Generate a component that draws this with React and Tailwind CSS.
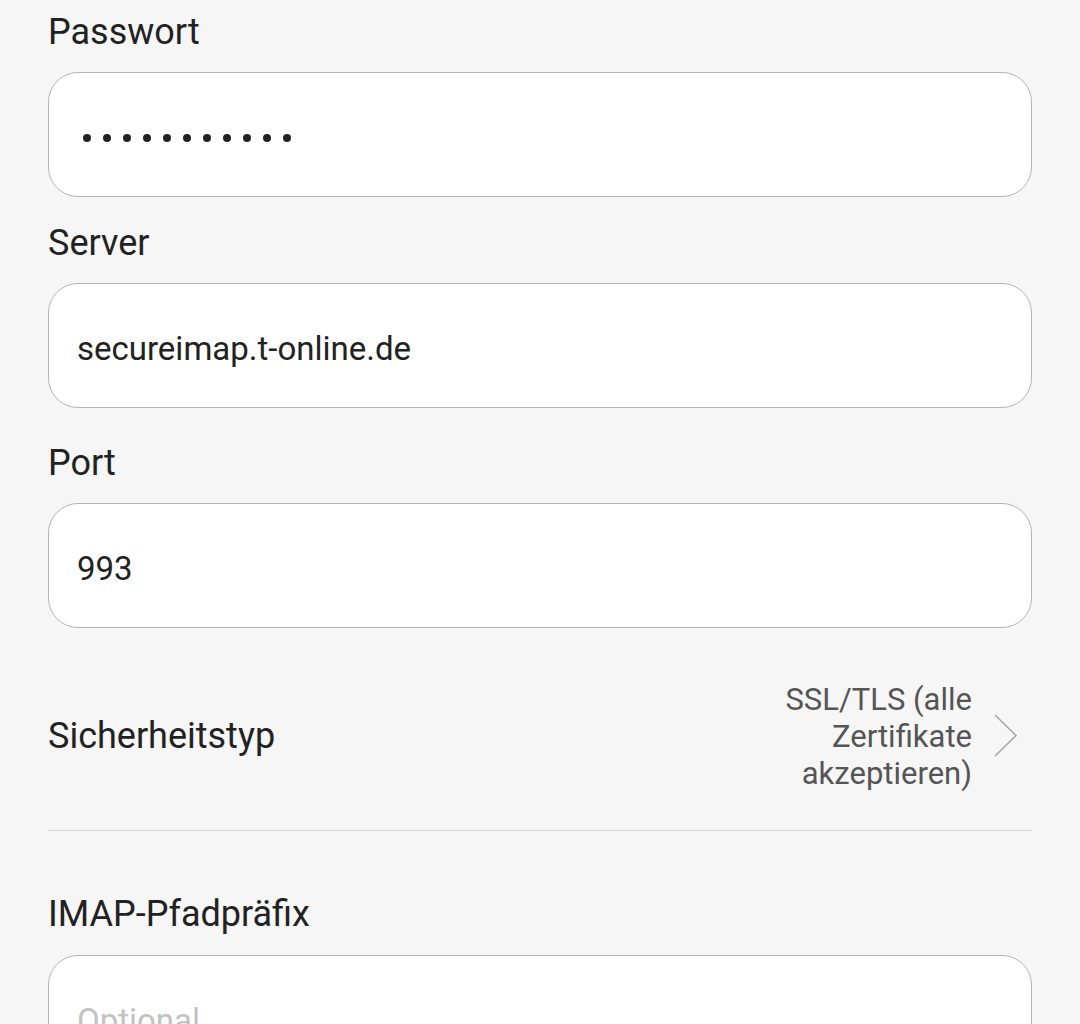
import React from "react";

const font = { fontFamily: "Roboto, 'Noto Sans', sans-serif" };

function Label({ children, className = "" }) {
  return (
    <div className={`text-[36px] leading-[42px] text-[#222222] ${className}`}>{children}</div>
  );
}

function Field({ children, className = "" }) {
  return (
    <div
      className={`mt-[19px] h-[125px] rounded-[30px] border border-[#b4b4b4] bg-white pl-[28px] pt-[6px] flex items-center ${className}`}
    >
      {children}
    </div>
  );
}

export default function App() {
  const dots = Array.from({ length: 11 });
  return (
    <div
      className="h-[1024px] overflow-hidden bg-[#f6f6f6] px-[48px] pt-[11px]"
      style={font}
    >
      <Label>Passwort</Label>
      <Field>
        <div className="ml-[6px] flex gap-[12px]">
          {dots.map((_, i) => (
            <span key={i} className="block h-[8px] w-[8px] rounded-full bg-[#222222]" />
          ))}
        </div>
      </Field>

      <Label className="mt-[25px]">Server</Label>
      <Field>
        <span className="text-[33px] leading-[39px] text-[#222222]">secureimap.t-online.de</span>
      </Field>

      <Label className="mt-[34px]">Port</Label>
      <Field>
        <span className="text-[33px] leading-[39px] text-[#222222]">993</span>
      </Field>

      <div className="mt-[14px] flex h-[189px] items-center justify-between border-b border-[#d8d8d8]">
        <span className="text-[36px] leading-[42px] text-[#222222]">Sicherheitstyp</span>
        <div className="flex items-center">
          <div className="text-right text-[31px] leading-[37px] text-[#555555]">
            <div>SSL/TLS (alle</div>
            <div>Zertifikate</div>
            <div>akzeptieren)</div>
          </div>
          <svg
            width="24"
            height="44"
            viewBox="0 0 24 44"
            className="ml-[22px] mr-[14px]"
            fill="none"
          >
            <polyline
              points="1,1 22,21.5 1,42"
              stroke="#a9a9a9"
              strokeWidth="1.6"
              strokeLinejoin="miter"
            />
          </svg>
        </div>
      </div>

      <Label className="mt-[62px]">IMAP-Pfadpräfix</Label>
      <div className="mt-[20px] h-[125px] rounded-[30px] border border-[#b4b4b4] bg-white pl-[28px] pt-[6px] flex items-center">
        <span className="text-[33px] leading-[39px] text-[#c2c2c2]">Optional</span>
      </div>
    </div>
  );
}
